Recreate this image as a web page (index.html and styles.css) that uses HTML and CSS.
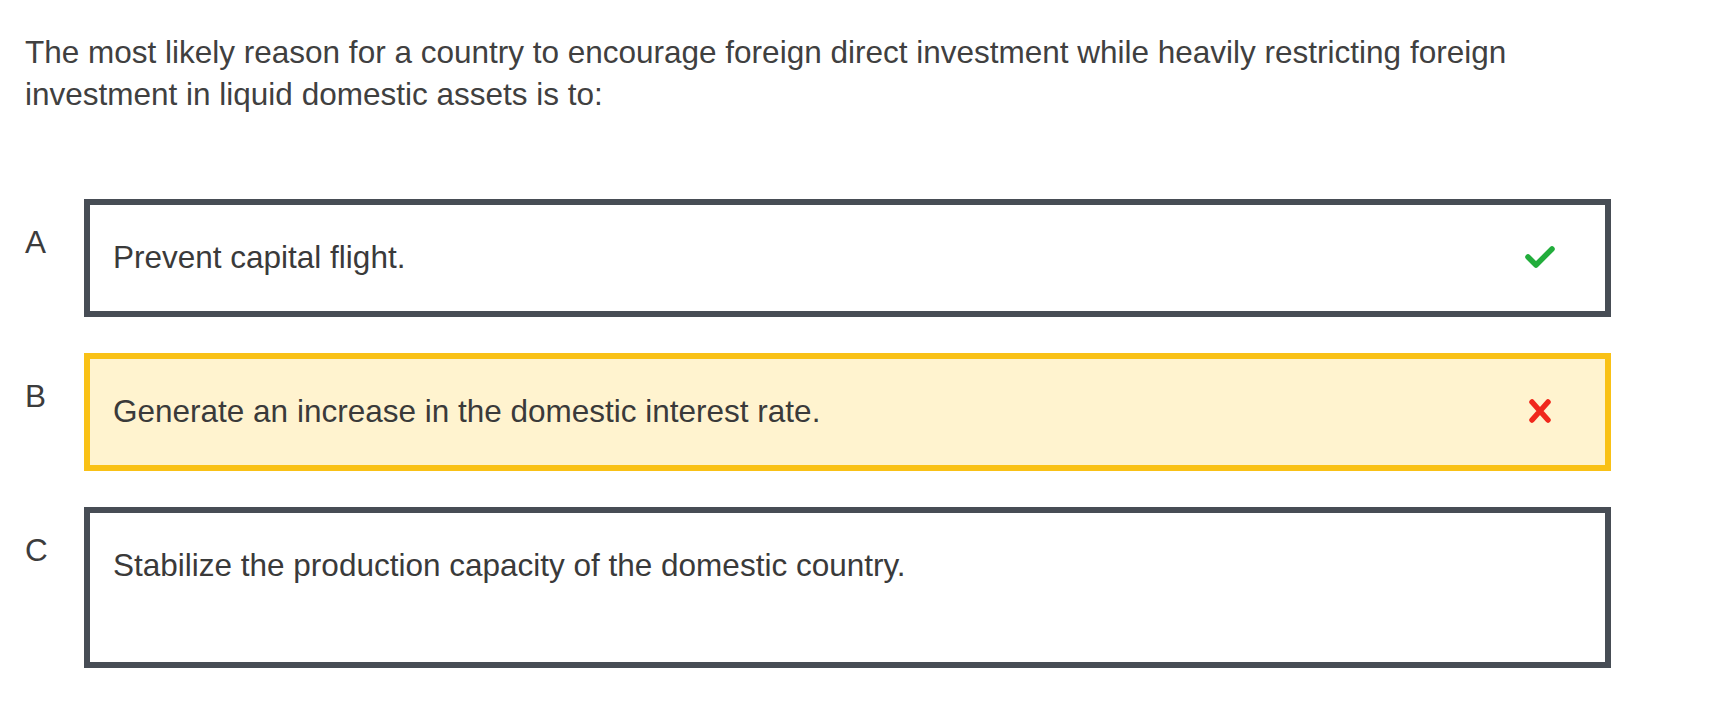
FILE: index.html
```html
<!DOCTYPE html>
<html lang="en">
<head>
<meta charset="utf-8">
<title>Question</title>
<link rel="stylesheet" href="styles.css">
</head>
<body>
<main class="quiz">
  <p class="question">The most likely reason for a country to encourage foreign direct investment while heavily restricting foreign investment in liquid domestic assets is to:</p>
  <ol class="options">
    <li class="option">
      <span class="letter">A</span>
      <div class="box">
        <span class="text">Prevent capital flight.</span>
        <svg class="icon" width="32" height="24" viewBox="0 0 32 24" aria-hidden="true"><polyline points="4,12 12,20 28,4" fill="none" stroke="#22ad3c" stroke-width="5.5" stroke-linecap="round" stroke-linejoin="round"/></svg>
      </div>
    </li>
    <li class="option">
      <span class="letter">B</span>
      <div class="box box-selected">
        <span class="text">Generate an increase in the domestic interest rate.</span>
        <svg class="icon" width="32" height="24" viewBox="0 0 32 24" aria-hidden="true"><path d="M8 3 L24 21 M24 3 L8 21" fill="none" stroke="#f0281c" stroke-width="5.5" stroke-linecap="round"/></svg>
      </div>
    </li>
    <li class="option">
      <span class="letter">C</span>
      <div class="box box-tall">
        <span class="text">Stabilize the production capacity of the domestic country.</span>
      </div>
    </li>
  </ol>
</main>
</body>
</html>
```

FILE: styles.css
```css
* { box-sizing: border-box; }

html, body {
  margin: 0;
  padding: 0;
  background: #ffffff;
}

body {
  font-family: "Liberation Sans", Arial, sans-serif;
  font-size: 31.5px;
  line-height: 42px;
  color: #3a3a3a;
}

.quiz {
  padding: 31px 0 0 25px;
}

.question {
  margin: 0;
  width: 1580px;
  color: #404040;
}

.options {
  list-style: none;
  margin: 84px 0 0 0;
  padding: 0;
  display: flex;
  flex-direction: column;
  gap: 36px;
}

.option {
  display: flex;
  align-items: flex-start;
}

.letter {
  width: 59px;
  flex: none;
  margin-top: 22px;
  color: #3c3c3c;
}

.box {
  width: 1527px;
  min-height: 118px;
  border: 6px solid #474d55;
  background: #ffffff;
  padding: 31px 49px 33px 23px;
  display: flex;
  align-items: center;
  justify-content: space-between;
}

.box-selected {
  border-color: #f9c116;
  background: #fff3cf;
}

.box-tall {
  align-items: flex-start;
  padding-bottom: 76px;
}

.text {
  color: #3a3a3a;
}

.icon {
  flex: none;
  display: block;
}
```
